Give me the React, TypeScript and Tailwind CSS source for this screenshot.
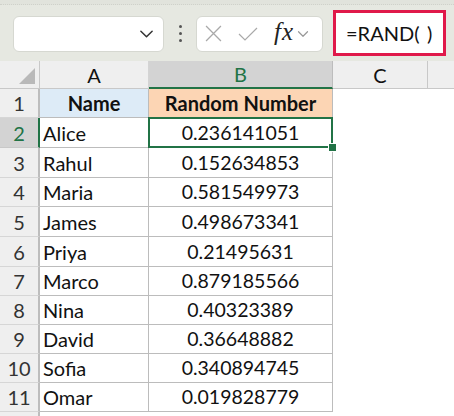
import React from 'react';

const rows: [string, string][] = [
    ['Alice', '0.236141051'],
    ['Rahul', '0.152634853'],
    ['Maria', '0.581549973'],
    ['James', '0.498673341'],
    ['Priya', '0.21495631'],
    ['Marco', '0.879185566'],
    ['Nina', '0.40323389'],
    ['David', '0.36648882'],
    ['Sofia', '0.340894745'],
    ['Omar', '0.019828779'],
];

// row heights so the grid lines land on the reference pixels
const heights = ['h-[29px]', 'h-[30px]', 'h-[30px]', 'h-[29px]', 'h-[30px]', 'h-[30px]', 'h-[29px]', 'h-[29px]', 'h-[29px]', 'h-[29px]', 'h-[29px]'];

function Chevron({ className }: { className?: string }) {
    return (
        <svg viewBox="0 0 16 10" className={className} fill="none" strokeWidth="1.6" strokeLinecap="round" strokeLinejoin="round">
            <path d="M2 2 L8 8 L14 2" />
        </svg>
    );
}

export default function App() {
    return (
        <div className="w-[454px] h-[416px] overflow-hidden bg-white font-['Lato',sans-serif] text-[20px] text-[#111]">
            {/* formula bar */}
            <div className="h-[61px] bg-[#e6e8e1] flex flex-col">
                <div className="h-[5px] border-b border-dotted border-[#cfd1ca] bg-[#e1e3dc]" />
                <div className="flex items-center pl-[13px] pt-[1px] flex-1">
                    <div className="w-[151px] h-[36px] bg-white rounded-[6px] border border-[#d6d8d1] flex items-center justify-end pr-[9px]">
                        <Chevron className="w-[15px] h-[10px] stroke-[#333]" />
                    </div>
                    <div className="w-[32px] flex flex-col items-center gap-[4px]">
                        <span className="w-[3px] h-[3px] rounded-full bg-[#555]" />
                        <span className="w-[3px] h-[3px] rounded-full bg-[#555]" />
                        <span className="w-[3px] h-[3px] rounded-full bg-[#555]" />
                    </div>
                    <div className="w-[127px] h-[36px] bg-white rounded-[6px] border border-[#d6d8d1] flex items-center pl-[8px]">
                        <svg viewBox="0 0 16 16" className="w-[17px] h-[17px]" fill="none" stroke="#a9a9a9" strokeWidth="1.2">
                            <path d="M1 1 L15 15 M15 1 L1 15" />
                        </svg>
                        <svg viewBox="0 0 20 14" className="w-[20px] h-[14px] ml-[16px]" fill="none" stroke="#a9a9a9" strokeWidth="1.2">
                            <path d="M1 7 L7 13 L19 1" />
                        </svg>
                        <span className="ml-[16px] font-['Liberation_Serif',serif] italic text-[25px] text-[#222] leading-none -mt-[4px] tracking-[1px]">fx</span>
                        <Chevron className="w-[12px] h-[8px] stroke-[#999] ml-[3px]" />
                    </div>
                    <div className="ml-[10px] -mt-[1px] w-[113px] h-[46px] border-[3px] border-[#e0194a] bg-white flex items-center pl-[10px]">
                        <span className="text-[20px] text-[#111]">=RAND(&thinsp;&nbsp;)</span>
                    </div>
                </div>
            </div>

            {/* sheet */}
            <div className="grid grid-cols-[40px_109px_184px_95px_1fr]">
                {/* column headers */}
                <div className="h-[28px] bg-[#efefef] border-r border-[#c8c8c8] border-b border-b-[#c8c8c8] relative">
                    <div className="absolute right-[4px] bottom-[4px] w-0 h-0 border-l-[16px] border-l-transparent border-b-[16px] border-b-[#b9b9b9]" />
                </div>
                <div className="h-[28px] bg-[#efefef] border-r border-[#d4d4d4] border-b border-b-[#c8c8c8] flex items-center justify-center">A</div>
                <div className="h-[28px] bg-[#d3d3d3] border-r border-[#bdbdbd] border-b-2 border-b-[#217346] flex items-center justify-center text-[#217346]">B</div>
                <div className="h-[28px] bg-[#efefef] border-r border-[#c8c8c8] border-b border-b-[#c8c8c8] flex items-center justify-center">C</div>
                <div className="h-[28px] bg-[#efefef] border-b border-b-[#c8c8c8]" />

                {/* row 1 */}
                <div className={`${heights[0]} bg-[#efefef] border-r-2 border-[#bdbdbd] border-b border-b-[#d6d6d6] flex items-center justify-center text-[#333]`}>1</div>
                <div className={`${heights[0]} bg-[#ddebf7] border-r border-b border-[#bcbcbc] flex items-center justify-center font-bold`}>Name</div>
                <div className={`${heights[0]} bg-[#fcd5b4] border-r border-b border-[#bcbcbc] flex items-center justify-center font-bold`}>Random Number</div>
                <div className={heights[0]} />
                <div className={heights[0]} />

                {rows.map(([name, value], i) => {
                    const h = heights[i + 1];
                    const selected = i === 0;
                    return (
                        <React.Fragment key={name}>
                            <div
                                className={
                                    selected
                                        ? `${h} bg-[#d3d3d3] border-r-2 border-r-[#217346] border-b border-b-[#c8c8c8] flex items-center justify-center text-[#217346]`
                                        : `${h} bg-[#efefef] border-r-2 border-r-[#bdbdbd] border-b border-b-[#d6d6d6] flex items-center justify-center text-[#333]`
                                }
                            >
                                {i + 2}
                            </div>
                            <div className={`${h} border-r border-b border-[#bcbcbc] flex items-center pl-[3px]`}>{name}</div>
                            <div className={`${h} border-r border-b border-[#bcbcbc] flex items-center justify-center relative text-[19.5px]`}>
                                {value}
                                {selected && (
                                    <>
                                        <div className="absolute -left-[1px] -top-[1px] -right-[1px] -bottom-[1px] border-2 border-[#217346] z-10" />
                                        <div className="absolute -right-[5px] -bottom-[5px] w-[9px] h-[9px] bg-[#217346] border border-white z-20" />
                                    </>
                                )}
                            </div>
                            <div className={h} />
                            <div className={h} />
                        </React.Fragment>
                    );
                })}
                <div className="h-[10px] bg-[#efefef] border-r-2 border-[#bdbdbd]" />
            </div>
        </div>
    );
}
